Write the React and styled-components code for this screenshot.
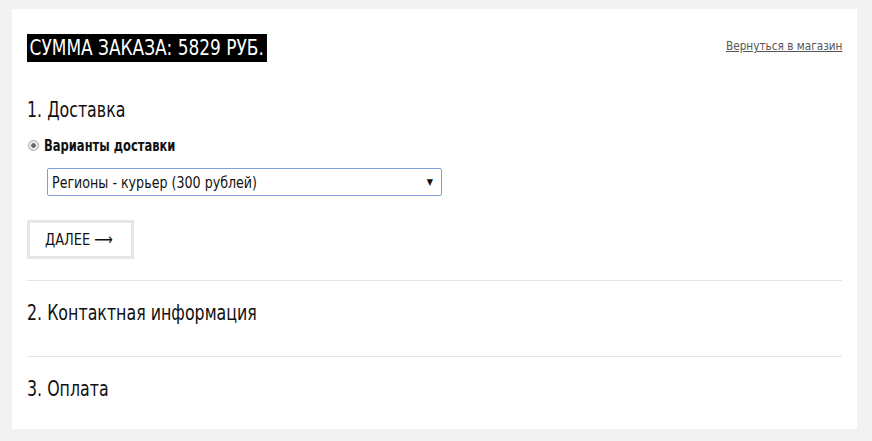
import styled, { createGlobalStyle } from "styled-components";

const GlobalStyle = createGlobalStyle`
  body {
    margin: 0;
    background: #f2f2f2;
    font-family: "DejaVu Sans Condensed", "Liberation Sans", sans-serif;
    font-stretch: condensed;
    color: #111;
  }
`;

function App() {
  return (
    <>
      <GlobalStyle />
      <Page>
        <Panel>
          <TopRow>
            <Total>СУММА ЗАКАЗА: 5829 РУБ.</Total>
            <BackLink href="#">Вернуться в магазин</BackLink>
          </TopRow>

          <Step>
            <StepTitle>1. Доставка</StepTitle>
            <OptionLabel>
              <Radio />
              <Narrow scale={0.8}>Варианты доставки</Narrow>
            </OptionLabel>
            <SelectBox>
              <Narrow scale={0.88}>Регионы - курьер (300 рублей)</Narrow>
              <Arrow>▼</Arrow>
            </SelectBox>
            <NextButton>
              <Narrow scale={0.9}>ДАЛЕЕ ⟶</Narrow>
            </NextButton>
          </Step>

          <Step bordered>
            <StepTitle>2. Контактная информация</StepTitle>
          </Step>

          <Step bordered last>
            <StepTitle>3. Оплата</StepTitle>
          </Step>
        </Panel>
      </Page>
    </>
  );
}

const Page = styled.div`
  padding: 9px 15px 13px 12px;
`;
const Panel = styled.div`
  background: #fff;
  padding: 25px 15px 0 15px;
  height: 420px;
  box-sizing: border-box;
`;
const TopRow = styled.div`
  display: flex;
  justify-content: space-between;
  align-items: flex-start;
`;
const Total = styled.div`
  background: #000;
  color: #fff;
  font-size: 22px;
  line-height: 28px;
  padding: 0 4px 0 3px;
  transform: scaleX(0.857);
  transform-origin: left center;
`;
const BackLink = styled.a`
  margin-top: 4px;
  font-size: 13px;
  color: #555;
  text-decoration: underline;
  transform: scaleX(0.9);
  transform-origin: right center;
`;
const Narrow = styled.span`
  display: inline-block;
  white-space: nowrap;
  transform: scaleX(${(p) => p.scale});
  transform-origin: left center;
`;
const Step = styled.div`
  border-top: ${(p) => (p.bordered ? "1px solid #e4e4e4" : "none")};
  padding-top: ${(p) => (p.bordered ? "18px" : "34px")};
  padding-bottom: ${(p) => (p.bordered ? "29px" : "21px")};
`;
const StepTitle = styled.div`
  font-size: 22px;
  line-height: 28px;
  white-space: nowrap;
  transform: scaleX(0.8);
  transform-origin: left center;
`;
const OptionLabel = styled.div`
  display: flex;
  align-items: center;
  gap: 5px;
  margin-top: 12px;
  font-size: 16px;
  font-weight: bold;
`;
const Radio = styled.span`
  width: 9px;
  height: 9px;
  border-radius: 50%;
  border: 1px solid #a8a8a8;
  background: radial-gradient(circle, #666 0 2px, #e8e8e8 2.5px);
  margin-left: 1px;
`;
const SelectBox = styled.div`
  margin: 13px 0 0 20px;
  width: 395px;
  height: 28px;
  box-sizing: border-box;
  border: 1px solid #7f9fd6;
  border-radius: 2px;
  display: flex;
  align-items: center;
  justify-content: space-between;
  padding: 0 8px 0 4px;
  font-size: 16px;
`;
const Arrow = styled.span`
  font-size: 9px;
`;
const NextButton = styled.button`
  display: block;
  margin-top: 24px;
  width: 107px;
  height: 39px;
  background: #fff;
  border: 3px solid #e6e6e6;
  font-family: inherit;
  font-size: 16px;
  color: #111;
  padding: 0 0 0 15px;
  text-align: left;
`;

export default App;
